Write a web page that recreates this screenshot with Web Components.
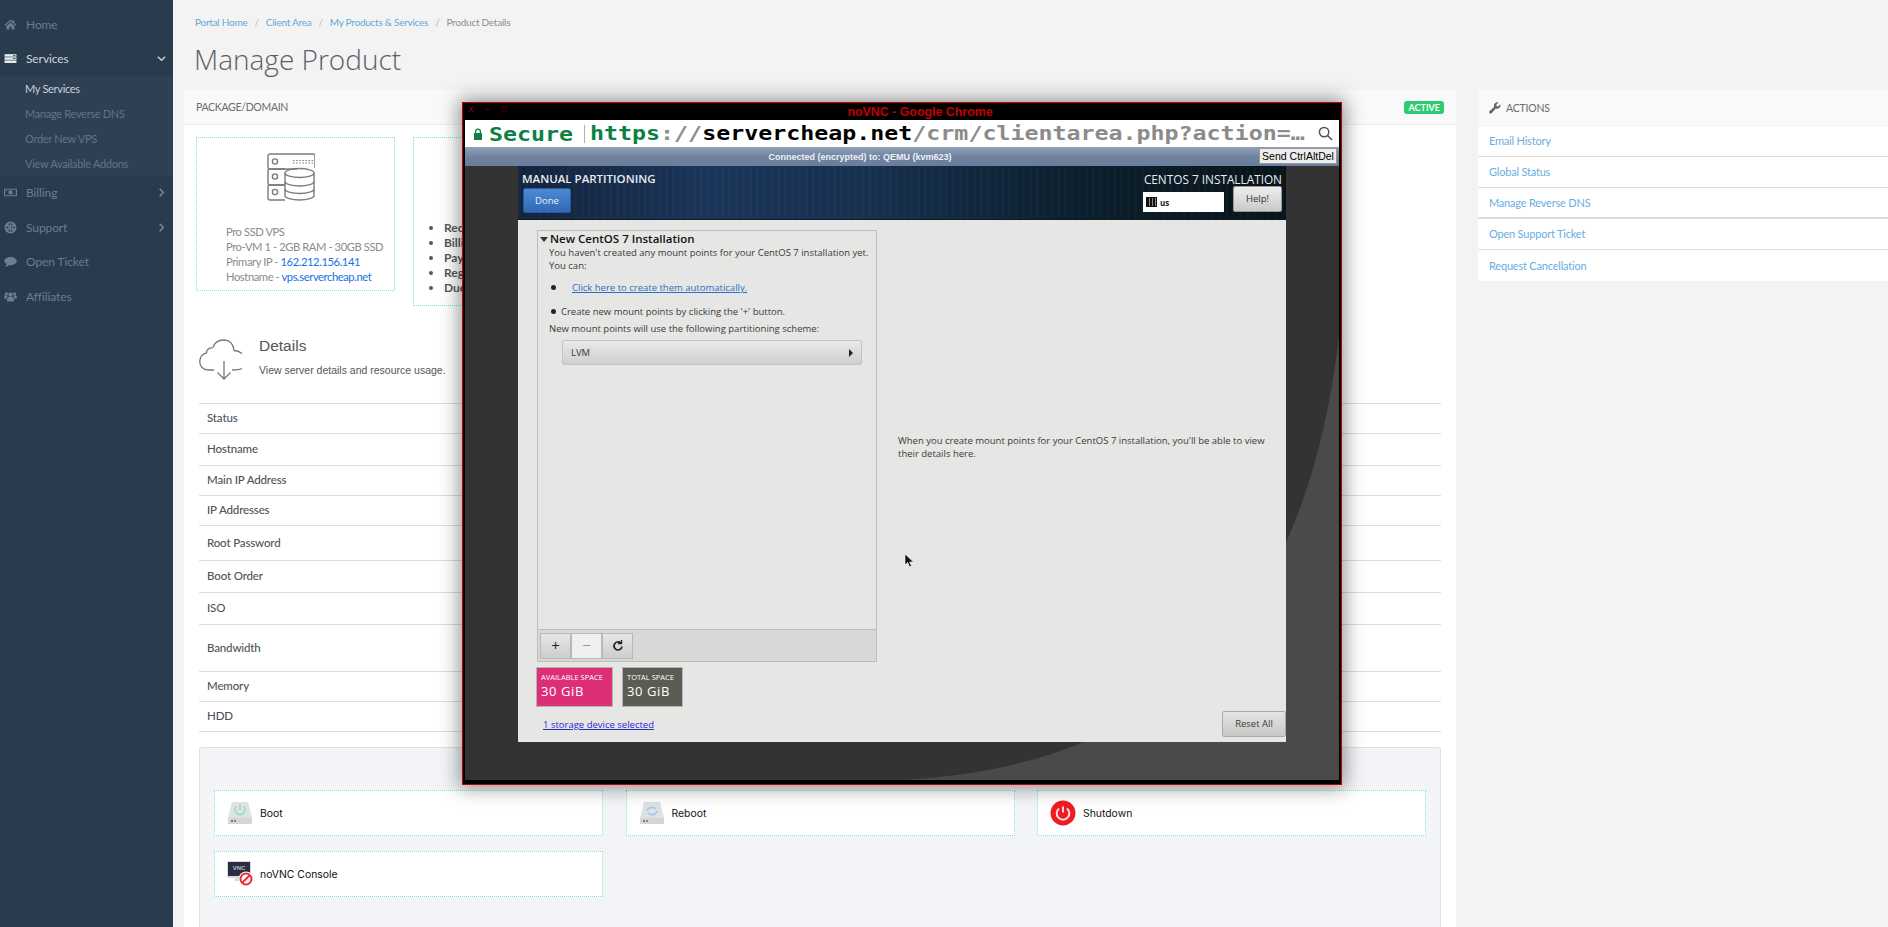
<!DOCTYPE html>
<html>
<head>
<meta charset="utf-8">
<title>Manage Product</title>
<style>
  html, body { margin: 0; height: 927px; overflow: hidden; background: #f3f3f3; }
  body { font-family: Lato, "Open Sans", sans-serif; }
</style>
</head>
<body>
<portal-page>
  <side-nav slot="nav">
    <nav-item icon="home" dim>Home</nav-item>
    <nav-item icon="server" caret="down">Services</nav-item>
    <nav-group>
      <sub-item active>My Services</sub-item>
      <sub-item>Manage Reverse DNS</sub-item>
      <sub-item>Order New VPS</sub-item>
      <sub-item>View Available Addons</sub-item>
    </nav-group>
    <nav-item icon="money" caret="right" dim>Billing</nav-item>
    <nav-item icon="globe" caret="right" dim>Support</nav-item>
    <nav-item icon="comment" dim>Open Ticket</nav-item>
    <nav-item icon="users" dim>Affiliates</nav-item>
  </side-nav>

  <bread-crumbs>
    <a>Portal Home</a><a>Client Area</a><a>My Products &amp; Services</a><a>Product Details</a>
  </bread-crumbs>
  <page-title>Manage Product</page-title>

  <product-panel slot="main">
    <info-row>
      <package-box>
        <div>Pro SSD VPS</div>
        <div>Pro-VM 1 - 2GB RAM - 30GB SSD</div>
        <div>Primary IP - <b>162.212.156.141</b></div>
        <div>Hostname - <b>vps.servercheap.net</b></div>
      </package-box>
      <billing-box>
        <li>Recurring</li><li>Billing</li><li>Payment</li><li>Registered</li><li>Due</li>
      </billing-box>
    </info-row>
    <details-head></details-head>
    <data-table>
      <data-row h="30">Status</data-row>
      <data-row h="32">Hostname</data-row>
      <data-row h="30">Main IP Address</data-row>
      <data-row h="30">IP Addresses</data-row>
      <data-row h="35">Root Password</data-row>
      <data-row h="32">Boot Order</data-row>
      <data-row h="32">ISO</data-row>
      <data-row h="47">Bandwidth</data-row>
      <data-row h="30">Memory</data-row>
      <data-row h="30">HDD</data-row>
    </data-table>
    <action-grid>
      <action-btn icon="boot">Boot</action-btn>
      <action-btn icon="reboot">Reboot</action-btn>
      <action-btn icon="shutdown">Shutdown</action-btn>
      <action-btn icon="vnc">noVNC Console</action-btn>
    </action-grid>
  </product-panel>

  <actions-card slot="side">
    <a>Email History</a>
    <a>Global Status</a>
    <a class="thick">Manage Reverse DNS</a>
    <a>Open Support Ticket</a>
    <a>Request Cancellation</a>
  </actions-card>

  <vnc-window slot="window">
    <centos-screen></centos-screen>
  </vnc-window>
</portal-page>

<script>
const ICONS = {
  home: `<path d="M12 3 1 12.6l1.5 1.6L12 6l9.5 8.2 1.5-1.6-4-3.5V4h-3v2.6z"/><path d="M4.5 14.6V21H10v-5h4v5h5.5v-6.4L12 8.2z"/>`,
  server: `<rect x="1" y="4" width="22" height="4.6"/><rect x="1" y="9.8" width="22" height="4.6"/><rect x="1" y="15.6" width="22" height="4.6"/><rect x="17" y="5.4" width="4" height="1.8" fill="#2a3b4d"/><rect x="17" y="11.2" width="4" height="1.8" fill="#2a3b4d"/>`,
  money: `<path fill-rule="evenodd" d="M0 5h24v14H0zM2 7v10h20V7zM12 8a4 4 0 1 1 0 8 4 4 0 0 1 0-8zM3.5 8.5h2.5l-2.5 2.5zM20.5 15.5H18l2.5-2.5z"/>`,
  globe: `<path fill-rule="evenodd" d="M12 1a11 11 0 1 1 0 22 11 11 0 0 1 0-22zM9.6 3.6 8 8.5h3V3.3zM13 3.3v5.2h3l-1.6-4.9zM3.5 10.5v3H7.4l-.1-3zM9.4 10.5v3H11v-3zM13 10.5v3h1.6v-3zM16.7 10.5l-.1 3h3.9v-3zM8 15.5l1.6 5H11v-5zM13 15.5v5h1.4l1.6-5z"/>`,
  comment: `<path d="M12 3.5c6.3 0 11.5 3.5 11.5 7.8S18.3 19 12 19c-1 0-2-.1-3-.3C7.3 20.2 4.800 21 2 21c1.500-1.300 2.500-3 2.700-4.700C2 14.900.5 13.200.5 11.300.5 7 5.700 3.500 12 3.500z"/>`,
  users: `<circle cx="12" cy="8.5" r="4"/><circle cx="4.5" cy="7" r="2.8"/><circle cx="19.5" cy="7" r="2.8"/><path d="M5.5 21v-4.5c0-2.500 2-3.800 3.500-3.800h6c1.500 0 3.500 1.300 3.500 3.800V21z"/><path d="M4.200 16.500H.5v-4c0-1.700 1-2.600 2.500-2.600h2.400c.2 1 .7 1.800 1.400 2.400-1.700.7-2.600 2.300-2.600 4.200zM19.800 16.500h3.700v-4c0-1.700-1-2.600-2.500-2.600h-2.400c-.2 1-.7 1.800-1.400 2.400 1.700.7 2.600 2.300 2.600 4.200z"/>`
};

class PortalPage extends HTMLElement {
  constructor() {
    super();
    this.attachShadow({ mode: "open" });
    this.shadowRoot.innerHTML = `
      <style>
        :host { display: grid; grid-template-columns: 173px 1fr; width: 1888px; height: 927px; position: relative; overflow: hidden; }
        .content { padding-left: 11px; min-width: 0; }
        .columns { display: grid; grid-template-columns: 1272px 410px; column-gap: 22px; align-items: start; }
      </style>
      <slot name="nav"></slot>
      <div class="content">
        <slot></slot>
        <div class="columns">
          <slot name="main"></slot>
          <slot name="side"></slot>
        </div>
      </div>
      <slot name="window"></slot>`;
  }
}

class SideNav extends HTMLElement {
  constructor() {
    super();
    this.attachShadow({ mode: "open" });
    this.shadowRoot.innerHTML = `
      <style>
        :host { display: block; background: #2a3b4d; height: 927px; padding-top: 7px; box-sizing: border-box; }
      </style>
      <slot></slot>`;
  }
}

class NavItem extends HTMLElement {
  constructor() {
    super();
    this.attachShadow({ mode: "open" });
  }
  connectedCallback() {
    const dim = this.hasAttribute("dim");
    const caret = this.getAttribute("caret");
    const chev = caret === "down" ? "M2 4l4 4 4-4" : "M4 2l4 4-4 4";
    this.shadowRoot.innerHTML = `
      <style>
        :host { display: flex; align-items: center; height: 34.4px; padding: 0 6px 0 4px; color: ${dim ? "#6b7d8f" : "#cdd6df"}; font-size: 12px; letter-spacing: -.1px; }
        svg.i { width: 13px; height: 13px; fill: currentColor; margin-right: 9px; flex: none; }
        span { flex: 1; }
        svg.c { width: 11px; height: 11px; fill: none; stroke: ${dim ? "#7d8d9c" : "#cdd6df"}; stroke-width: 1.5; }
      </style>
      <svg class="i" viewBox="0 0 24 24" style="${this.getAttribute("icon") === "server" ? "color:#e8edf1;" : ""}">${ICONS[this.getAttribute("icon")]}</svg>
      <span><slot></slot></span>
      ${caret ? `<svg class="c" viewBox="0 0 12 12"><path d="${chev}"/></svg>` : ""}`;
  }
}

class NavGroup extends HTMLElement {
  constructor() {
    super();
    this.attachShadow({ mode: "open" });
    this.shadowRoot.innerHTML = `
      <style>:host { display: block; background: #2f4052; }</style>
      <slot></slot>`;
  }
}

class SubItem extends HTMLElement {
  constructor() {
    super();
    this.attachShadow({ mode: "open" });
    this.shadowRoot.innerHTML = `
      <style>
        :host { display: flex; align-items: center; height: 25px; padding-left: 25px; font-size: 11px; letter-spacing: -.3px; color: #62748a; }
        :host([active]) { color: #c8d1da; }
      </style>
      <slot></slot>`;
  }
}

class BreadCrumbs extends HTMLElement {
  constructor() {
    super();
    this.attachShadow({ mode: "open" });
    this.shadowRoot.innerHTML = `
      <style>
        :host { display: flex; align-items: center; height: 16px; padding: 14px 0 0 11px; font-size: 10px; letter-spacing: -.25px; }
        ::slotted(a) { color: #62a8d8; }
        ::slotted(a:last-child) { color: #8a8f94; }
        ::slotted(a:not(:last-child))::after { content: "/"; color: #b5b5b5; margin: 0 7px; }
      </style>
      <slot></slot>`;
  }
}

class PageTitle extends HTMLElement {
  constructor() {
    super();
    this.attachShadow({ mode: "open" });
    this.shadowRoot.innerHTML = `
      <style>
        :host { display: block; height: 60px; padding-left: 10px; font-family: "Open Sans", sans-serif; font-size: 28px; font-weight: 300; line-height: 58px; color: #5a6268; width: 800px; }
      </style>
      <slot></slot>`;
  }
}

class ProductPanel extends HTMLElement {
  constructor() {
    super();
    this.attachShadow({ mode: "open" });
    this.shadowRoot.innerHTML = `
      <style>
        :host { display: block; width: 1272px; height: 837px; background: #fff; }
        header { display: flex; justify-content: space-between; align-items: center; height: 35px; padding: 0 12px; background: #f9f9f9; border-bottom: 1px solid #eee; box-sizing: border-box; font-size: 10.5px; letter-spacing: -.3px; color: #6c6c6c; }
        .badge { background: #2ecc71; color: #fff; font-weight: 700; font-size: 9px; letter-spacing: 0; border-radius: 3px; height: 13px; line-height: 13px; padding: 0 4px; }
      </style>
      <header>PACKAGE/DOMAIN <span class="badge">ACTIVE</span></header>
      <slot></slot>`;
  }
}

class InfoRow extends HTMLElement {
  constructor() {
    super();
    this.attachShadow({ mode: "open" });
    this.shadowRoot.innerHTML = `
      <style>:host { display: flex; align-items: flex-start; gap: 18px; padding: 12px 12px 0; height: 169px; }</style>
      <slot></slot>`;
  }
}

class PackageBox extends HTMLElement {
  constructor() {
    super();
    this.attachShadow({ mode: "open" });
    this.shadowRoot.innerHTML = `
      <style>
        :host { display: block; width: 199px; height: 154px; box-sizing: border-box; border: 1px dotted #7de8c8; padding: 15px 0 0 29px; font-size: 11.2px; letter-spacing: -.42px; line-height: 15px; color: #8b8b8b; }
        svg { display: block; width: 48px; height: 48px; margin: 0 0 23px 41px; fill: none; stroke: #7b7b7b; stroke-width: 1.4; }
        ::slotted(div) { white-space: nowrap; }
      </style>
      <svg viewBox="0 0 48 48">
        <path d="M30 16H3a2 2 0 0 1-2-2V3a2 2 0 0 1 2-2h43a2 2 0 0 1 2 2v12"/>
        <path d="M18 32H3a2 2 0 0 1-2-2V18a2 2 0 0 1 2-2h15"/>
        <path d="M18 47H3a2 2 0 0 1-2-2V34a2 2 0 0 1 2-2h15"/>
        <circle cx="8" cy="8.5" r="2.6"/><circle cx="8" cy="23.5" r="2.6"/><circle cx="8" cy="39" r="2.6"/>
        <path d="M26 7.5h21M26 10h21" stroke-dasharray="1.5 1.6" stroke-width="1"/>
        <ellipse cx="32.5" cy="20" rx="14.5" ry="4.5"/>
        <path d="M18 20v22.5c0 2.5 6.5 4.5 14.5 4.5S47 45 47 42.5V20"/>
        <path d="M18 28.5c0 2.5 6.5 4.5 14.5 4.5S47 31 47 28.5M18 36c0 2.5 6.5 4.5 14.5 4.5S47 38.5 47 36"/>
      </svg>
      <slot></slot>`;
  }
  connectedCallback() {
    this.querySelectorAll("b").forEach(b => { b.style.cssText = "font-weight:400;color:#1a6fe8"; });
  }
}

class BillingBox extends HTMLElement {
  constructor() {
    super();
    this.attachShadow({ mode: "open" });
    this.shadowRoot.innerHTML = `
      <style>
        :host { display: block; width: 200px; height: 169px; box-sizing: border-box; border: 1px dotted #7de8c8; padding-top: 82px; }
        ul { margin: 0; padding: 0 0 0 30px; font-size: 12px; line-height: 15px; color: #55595c; font-weight: 700; }
      </style>
      <ul><slot></slot></ul>`;
  }
}

class DetailsHead extends HTMLElement {
  constructor() {
    super();
    this.attachShadow({ mode: "open" });
    this.shadowRoot.innerHTML = `
      <style>
        :host { display: flex; height: 97px; box-sizing: border-box; padding: 34px 0 0 15px; font-family: "Liberation Sans", sans-serif; color: #555; }
        svg { width: 44px; height: 42px; margin: -1px 16px 0 0; flex: none; fill: none; stroke: #777; stroke-width: 1.3; }
        h2 { margin: -3px 0 8px; font-size: 15.5px; font-weight: 400; line-height: 18px; color: #555; }
        p { margin: 0; font-size: 10.5px; line-height: 14px; }
      </style>
      <svg viewBox="0 0 44 42">
        <path d="M15 31H9.5C4 31 .7 27 .7 22.5.7 17.5 4 14.5 7.5 14c-.3-3 2.5-5.5 6-5"/>
        <path d="M14 8.5C15.5 4 19.5 1 24.5 1c6 0 10 4 10.5 10.5 3 0 5 .5 8 3"/>
        <path d="M33 31c3.5 0 7.5-.3 10-1.5"/>
        <path d="M25 22v18M18.5 33.5 25 40l6.5-6.5"/>
      </svg>
      <div><h2>Details</h2><p>View server details and resource usage.</p></div>`;
  }
}

class DataTable extends HTMLElement {
  constructor() {
    super();
    this.attachShadow({ mode: "open" });
    this.shadowRoot.innerHTML = `
      <style>:host { display: block; margin: 0 15px; border-bottom: 1px solid #ddd; }</style>
      <slot></slot>`;
  }
}

class DataRow extends HTMLElement {
  constructor() {
    super();
    this.attachShadow({ mode: "open" });
  }
  connectedCallback() {
    this.shadowRoot.innerHTML = `
      <style>
        :host { display: flex; align-items: center; box-sizing: border-box; height: ${this.getAttribute("h")}px; border-top: 1px solid #ddd; padding: 0 0 2px 8px; font-size: 11.5px; letter-spacing: -.15px; color: #4f5457; font-weight: 500; }
      </style>
      <slot></slot>`;
  }
}

class ActionGrid extends HTMLElement {
  constructor() {
    super();
    this.attachShadow({ mode: "open" });
    this.shadowRoot.innerHTML = `
      <style>
        :host { display: grid; grid-template-columns: repeat(3, 389px); gap: 15px 22.5px; align-content: start; margin: 15px 15px 0; padding: 42px 14px 20px; height: 200px; box-sizing: border-box; background: #f3f4f8; border: 1px solid #e0e0e0; border-radius: 3px; }
      </style>
      <slot></slot>`;
  }
}

class ActionBtn extends HTMLElement {
  constructor() {
    super();
    this.attachShadow({ mode: "open" });
  }
  connectedCallback() {
    const art = {
      boot: `<path d="M5 2h16l4 16H1z" fill="#dfe2e5"/><rect x="1" y="18" width="24" height="6" fill="#d4d7da"/><rect x="4" y="20" width="2" height="2" fill="#777"/><rect x="7" y="20" width="2" height="2" fill="#888"/><path d="M9 6.5a5 5 0 1 0 8 0M13 4v6" fill="none" stroke="#9be0b4" stroke-width="1.6"/>`,
      reboot: `<path d="M5 2h16l4 16H1z" fill="#dfe2e5"/><rect x="1" y="18" width="24" height="6" fill="#d4d7da"/><rect x="4" y="20" width="2" height="2" fill="#777"/><rect x="7" y="20" width="2" height="2" fill="#888"/><path d="M8 11a5 4 0 0 1 9-2M18 11a5 4 0 0 1-9 2" fill="none" stroke="#a9c6ef" stroke-width="1.8"/>`,
      shutdown: `<circle cx="13" cy="13" r="12.5" fill="#ee1c25"/><path d="M9 8.5a6.3 6.3 0 1 0 8 0M13 6.5v6" fill="none" stroke="#fbdcdc" stroke-width="2"/>`,
      vnc: `<rect x="0" y="0" width="24" height="17" rx="1" fill="#d8dade"/><rect x="1" y="1" width="22" height="14" fill="#2a2d44"/><text x="12" y="9" text-anchor="middle" font-family="Liberation Sans" font-size="6" font-weight="700" fill="#b8bcc8">VNC</text><rect x="8" y="17" width="8" height="3" fill="#d8dade"/><circle cx="19" cy="18" r="7.5" fill="#fff"/><circle cx="19" cy="18" r="5.5" fill="none" stroke="#ee2b3a" stroke-width="2"/><path d="M15.5 21.5l7-7" stroke="#ee2b3a" stroke-width="2"/>`
    }[this.getAttribute("icon")];
    this.shadowRoot.innerHTML = `
      <style>
        :host { display: flex; align-items: center; height: 46px; box-sizing: border-box; padding-left: 12px; background: #fff; border: 1px dotted #7de8c8; font-family: Inter, "Liberation Sans", sans-serif; font-size: 10.4px; color: #111; }
        svg { width: 26px; height: 26px; margin-right: 7px; flex: none; }
      </style>
      <svg viewBox="0 0 26 26">${art}</svg>
      <slot></slot>`;
  }
}

class ActionsCard extends HTMLElement {
  constructor() {
    super();
    this.attachShadow({ mode: "open" });
    this.shadowRoot.innerHTML = `
      <style>
        :host { display: block; width: 410px; background: #fff; }
        header { display: flex; align-items: center; gap: 5px; height: 36px; box-sizing: border-box; padding-left: 11px; background: #f9f9f9; border-bottom: 1px solid #eee; font-size: 10.5px; letter-spacing: -.2px; color: #6c6c6c; }
        svg { width: 12px; height: 12px; fill: #666; }
        ::slotted(a) { display: flex; align-items: center; height: 31px; box-sizing: border-box; padding: 0 0 1px 11px; border-bottom: 1px solid #ddd; font-size: 11px; letter-spacing: -.2px; color: #69ade0; }
        ::slotted(a.thick) { border-bottom-width: 2px; }
        ::slotted(a:last-child) { border-bottom: 0; }
      </style>
      <header><svg viewBox="0 0 24 24"><path d="M23 6.5c0 4-3 7-7 7-1 0-1.8-.2-2.5-.5L5.5 22a3 3 0 0 1-4.200 0 3 3 0 0 1 0-4.200l9-8C10 9 9.800 8 9.800 7c0-4 3-6.500 7-6.500.8 0 1.500.1 2.200.3L15 4.800v3.700h3.800L22.700 4.500c.2.600.3 1.300.3 2z"/></svg>ACTIONS</header>
      <slot></slot>`;
  }
}

class VncWindow extends HTMLElement {
  constructor() {
    super();
    this.attachShadow({ mode: "open" });
    this.shadowRoot.innerHTML = `
      <style>
        :host { display: flex; flex-direction: column; position: absolute; left: 462px; top: 102px; width: 880px; height: 683px; box-sizing: border-box; border: 1px solid #c00000; background: #000; padding: 0 2px 4px 2px; box-shadow: 0 0 18px 3px rgba(0,0,0,.42); }
        .title { position: relative; display: flex; justify-content: center; align-items: center; height: 17px; padding-left: 36px; color: #c20000; font: 700 12.4px "Liberation Sans", sans-serif; }
        .wm { position: absolute; left: 3px; top: 2px; font: 400 9px "Liberation Mono", monospace; color: #8c0000; letter-spacing: 3px; }
        .url { display: flex; align-items: center; height: 27px; background: #fff; overflow: hidden; position: relative; font: 700 19px "DejaVu Sans Mono", monospace; white-space: nowrap; }
        .lock { width: 8px; height: 12px; margin: 0 7px 0 9px; flex: none; fill: #0b8043; }
        .stretch { display: inline-block; transform: scaleX(1.225); transform-origin: left center; margin-top: -2px; }
        .sec { color: #0b8043; width: 84px; flex: none; }
        .sep { width: 1px; height: 18px; background: #b0b0b0; margin: 0 5px 0 11px; flex: none; }
        .g { color: #0b8043; } .m { color: #8b8b8b; } .k { color: #000; }
        .mag { position: absolute; right: 6px; width: 15px; height: 15px; fill: none; stroke: #555; stroke-width: 1.6; }
        .bar { display: flex; align-items: center; height: 19px; background: linear-gradient(#8fa0b8, #6e82a0 55%, #6a7e9c); position: relative; justify-content: center; color: #eef1f5; font: 700 9px "Liberation Sans", sans-serif; padding-right: 84px; }
        .ctrl { position: absolute; right: 2px; top: 1px; height: 16px; width: 78px; box-sizing: border-box; border: 1px solid #999; background: #eee; color: #000; font: 400 10.5px/14px "Liberation Sans", sans-serif; text-align: center; }
        .desk { flex: 1; position: relative; background: #333; display: flex; justify-content: center; overflow: hidden; }
        .swoosh { position: absolute; inset: 0; width: 100%; height: 100%; }
      </style>
      <div class="title"><span class="wm">X − □</span>noVNC - Google Chrome</div>
      <div class="url">
        <svg class="lock" viewBox="0 0 8 12"><path d="M1 5V3.500a3 3 0 0 1 6 0V5h1v7H0V5zM2.200 5h3.600V3.500a1.800 1.800 0 0 0-3.600 0z"/></svg>
        <span class="sec"><span class="stretch">Secure</span></span>
        <span class="sep"></span>
        <span class="stretch"><span class="g">https</span><span class="m">://</span><span class="k">servercheap.net</span><span class="m">/crm/clientarea.php?action=…</span></span>
        <svg class="mag" viewBox="0 0 16 16"><circle cx="6.5" cy="6.5" r="5"/><path d="M10 10l5 5"/></svg>
      </div>
      <div class="bar"><span>Connected (encrypted) to: QEMU (kvm623)</span><div class="ctrl">Send CtrlAltDel</div></div>
      <div class="desk">
        <svg class="swoosh" viewBox="0 0 876 614" preserveAspectRatio="none"><path d="M440 614C680 600 840 480 876 170V614z" fill="#4a4a4a"/></svg>
        <slot></slot>
      </div>`;
  }
}

class CentosScreen extends HTMLElement {
  constructor() {
    super();
    this.attachShadow({ mode: "open" });
    this.shadowRoot.innerHTML = `
      <style>
        :host { display: block; position: relative; width: 768px; height: 576px; background: #e6e6e4; font: 400 9.5px/13px "Open Sans", "DejaVu Sans", sans-serif; color: #3a3a3a; }
        .head { display: flex; justify-content: space-between; height: 54px; box-sizing: border-box; padding: 6px 4px 0 4px; color: #e8ecf0; background: repeating-linear-gradient(90deg, rgba(255,255,255,.02) 0 3px, transparent 3px 7px), linear-gradient(90deg, #14233c, #1a3459 25%, #16304f 45%, #0c2030 70%, #071318); border-bottom: 1px solid #0c1a24; }
        .head h1 { margin: 0 0 2px; font-size: 11.5px; line-height: 14px; font-weight: 600; }
        .done { width: 48px; height: 25px; margin-left: 1px; background: linear-gradient(#4a8ad4, #3069b4); border: 1px solid #2a5a9a; border-radius: 2px; box-sizing: border-box; color: #e8f0fa; text-align: center; line-height: 23px; font-size: 9.5px; }
        .r { display: flex; flex-direction: column; align-items: flex-end; }
        .r h1 { font-weight: 400; font-size: 11.8px; margin-bottom: 0; }
        .rr { display: flex; gap: 9px; }
        .kb { width: 81px; height: 20px; margin-top: 6px; background: #fff; color: #222; box-sizing: border-box; padding-left: 3px; font-weight: 700; font-size: 8px; display: flex; gap: 3px; align-items: center; }
        .kb i { display: block; width: 11px; height: 10px; background: repeating-linear-gradient(90deg, #111 0 2px, #888 2px 3px); border: 1px solid #111; box-sizing: border-box; }
        .help { width: 49px; height: 26px; background: linear-gradient(#eee, #c9c9c7); border: 1px solid #999; border-radius: 2px; box-sizing: border-box; text-align: center; line-height: 24px; color: #333; }
        .body { display: grid; grid-template-columns: 359px 1fr; grid-template-rows: 442px 45px auto; height: 522px; }
        .left { padding: 10px 0 0 19px; }
        .panel { display: flex; flex-direction: column; width: 340px; height: 432px; box-sizing: border-box; border: 1px solid #bdbdbb; }
        .list { flex: 1; padding: 1px 0 0 2px; }
        .list h2 { margin: 0; font-size: 11.5px; line-height: 14px; color: #111; font-weight: 600; }
        .list h2::before { content: ""; display: inline-block; border: 4px solid transparent; border-top: 5px solid #333; border-bottom: 0; margin-right: 2px; vertical-align: 1px; }
        .list p { margin: 0 0 0 9px; white-space: nowrap; }
        .bul { display: flex; align-items: center; margin-left: 11px; }
        .bul::before { content: ""; width: 5px; height: 5px; border-radius: 50%; background: #222; flex: none; margin-right: 5px; }
        a { color: #2a6fc0; text-decoration: underline; }
        .combo { display: flex; justify-content: space-between; align-items: center; height: 25px; margin: 5px 0 0 22px; width: 300px; box-sizing: border-box; padding: 0 8px; border: 1px solid #c4c4c2; border-radius: 2px; background: linear-gradient(#e9e9e7, #cfcfcd); }
        .combo::after { content: ""; border: 4px solid transparent; border-left: 4px solid #222; border-right: 0; }
        .tools { display: flex; height: 32px; box-sizing: border-box; padding: 3px 2px; background: #d8d8d6; border-top: 1px solid #bdbdbb; }
        .tools span { width: 31px; height: 26px; box-sizing: border-box; border: 1px solid #b8b8b6; background: linear-gradient(#e6e6e4, #cdcdcb); text-align: center; font-size: 15px; line-height: 22px; color: #222; }
        .tools span.off { background: #f0f0ef; color: #999; }
        .tools svg { width: 12px; height: 12px; fill: none; stroke: #222; stroke-width: 1.7; margin-top: 6px; }
        .msg { display: flex; align-items: center; padding: 11px 20px 0 21px; }
        .spaces { display: flex; gap: 9px; padding: 5px 0 0 18px; }
        .sp { height: 40px; box-sizing: border-box; border: 1px solid #b5b5b3; padding: 4px; color: #fff; font-size: 7.5px; line-height: 11px; white-space: nowrap; }
        .sp b { display: block; font-size: 13px; font-weight: 400; line-height: 17px; letter-spacing: .6px; }
        .pink { width: 77px; background: #dc2f78; }
        .grey { width: 61px; background: #5c5c54; }
        .foot { padding: 11px 0 0 25px; }
        .foot a { color: #2a2ad0; }
        .reset { justify-self: end; align-self: start; width: 64px; height: 26px; margin-top: 4px; background: linear-gradient(#e4e4e2, #c8c8c6); border: 1px solid #aaa; border-radius: 2px; box-sizing: border-box; text-align: center; line-height: 24px; }
        .arrow { position: absolute; left: 386px; top: 388px; width: 10px; height: 14px; }
      </style>
      <div class="head">
        <div><h1>MANUAL PARTITIONING</h1><div class="done">Done</div></div>
        <div class="r"><h1>CENTOS 7 INSTALLATION</h1><div class="rr"><div class="kb"><i></i>us</div><div class="help">Help!</div></div></div>
      </div>
      <div class="body">
        <div class="left">
          <div class="panel">
            <div class="list">
              <h2>New CentOS 7 Installation</h2>
              <p>You haven't created any mount points for your CentOS 7 installation yet.<br>You can:</p>
              <div class="bul" style="margin-top:9px;gap:11px"><a>Click here to create them automatically.</a></div>
              <div class="bul" style="margin-top:11px">Create new mount points by clicking the '+' button.</div>
              <p style="margin-top:4px">New mount points will use the following partitioning scheme:</p>
              <div class="combo">LVM</div>
            </div>
            <div class="tools">
              <span>+</span><span class="off">−</span><span><svg viewBox="0 0 12 12"><path d="M10 6.5a4 4 0 1 1-1.3-3.5"/><path d="M9.5 0v3.5H6" stroke-width="1.4"/></svg></span>
            </div>
          </div>
        </div>
        <div class="msg"><div>When you create mount points for your CentOS 7 installation, you'll be able to view their details here.</div></div>
        <div class="spaces">
          <div class="sp pink">AVAILABLE SPACE<b>30 GiB</b></div>
          <div class="sp grey">TOTAL SPACE<b>30 GiB</b></div>
        </div>
        <div></div>
        <div class="foot"><a>1 storage device selected</a></div>
        <div class="reset">Reset All</div>
      </div>
      <svg class="arrow" viewBox="0 0 10 14"><path d="M1 0v11l2.800-2.500L5.500 13l2-1-1.800-4H9.500z" fill="#111" stroke="#fff" stroke-width=".6"/></svg>`;
  }
}

customElements.define("portal-page", PortalPage);
customElements.define("side-nav", SideNav);
customElements.define("nav-item", NavItem);
customElements.define("nav-group", NavGroup);
customElements.define("sub-item", SubItem);
customElements.define("bread-crumbs", BreadCrumbs);
customElements.define("page-title", PageTitle);
customElements.define("product-panel", ProductPanel);
customElements.define("info-row", InfoRow);
customElements.define("package-box", PackageBox);
customElements.define("billing-box", BillingBox);
customElements.define("details-head", DetailsHead);
customElements.define("data-table", DataTable);
customElements.define("data-row", DataRow);
customElements.define("action-grid", ActionGrid);
customElements.define("action-btn", ActionBtn);
customElements.define("actions-card", ActionsCard);
customElements.define("vnc-window", VncWindow);
customElements.define("centos-screen", CentosScreen);
</script>
</body>
</html>
